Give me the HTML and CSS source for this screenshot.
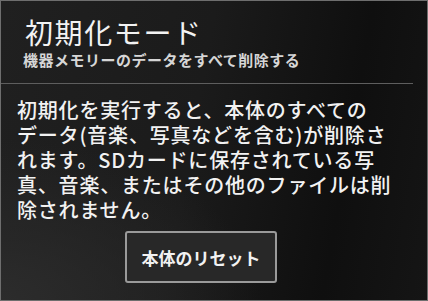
FILE: index.html
```html
<!DOCTYPE html>
<html>
<head>
    <meta charset="utf-8" />
    <title>初期化モード</title>
    <link rel="stylesheet" href="styles.css">
</head>
<body>
    <div id="screen">
        <div class="header">
            <div class="title">初期化モード</div>
            <div class="subtitle">機器メモリーのデータをすべて削除する</div>
        </div>
        <p class="message">
            <span>初期化を実行すると、本体のすべての</span>
            <span>データ(音楽、写真などを含む)が削除さ</span>
            <span>れます。SDカードに保存されている写</span>
            <span>真、音楽、またはその他のファイルは削</span>
            <span>除されません。</span>
        </p>
        <div class="actions">
            <button class="resetbtn">本体のリセット</button>
        </div>
    </div>
</body>
</html>
```
FILE: styles.css
```css
body{
    margin:0;
}
#screen{
    width:428px;
    height:301px;
    box-sizing:border-box;
    border:1px solid #6e6e6e;
    overflow:hidden;
    font-family:"Noto Sans CJK JP", "Noto Sans", sans-serif;
    color:#f2f2f2;
    background:
        radial-gradient(ellipse 260px 160px at 0% 100%, #2c2c2c, rgba(44,44,44,0)),
        linear-gradient(100deg, #202020 0%, #1b1b1b 45%, #0f0f0f 78%, #151515 100%);
}
.header{
    padding:14px 14px 13px 24px;
    border-bottom:1px solid #5e5e5e;
    margin:0 14px 0 0;
}
.title{
    font-size:28px;
    line-height:35px;
    letter-spacing:1.6px;
}
.subtitle{
    font-size:15px;
    line-height:20px;
    letter-spacing:0.5px;
    font-weight:bold;
    color:#d6d6d6;
    margin-left:-2px;
}
.message{
    margin:13px 0 0 16px;
    font-size:20px;
    font-weight:500;
    letter-spacing:0.8px;
}
.message span{
    display:block;
    height:25px;
    line-height:25px;
    white-space:nowrap;
}
.actions{
    margin-top:9px;
    padding-left:124px;
}
.resetbtn{
    width:152px;
    height:52px;
    background:#282828;
    border:2px solid #9a9a9a;
    border-radius:3px;
    color:#f2f2f2;
    font:bold 17px "Noto Sans CJK JP", sans-serif;
}
```
